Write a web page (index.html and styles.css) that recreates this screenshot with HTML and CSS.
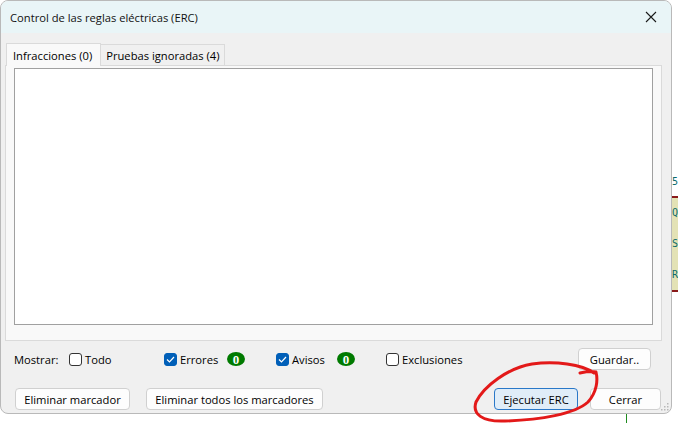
FILE: index.html
```html
<!DOCTYPE html>
<html lang="es">
<head>
<meta charset="utf-8">
<link rel="stylesheet" href="styles.css">
</head>
<body>
<div class="desktop">
  <div class="schem">
    <span class="pin pin5">5</span>
    <div class="part">
      <span class="pin">Q</span>
      <span class="pin">S</span>
      <span class="pin">R</span>
    </div>
  </div>
  <div class="wire"></div>

  <div class="window">
    <div class="titlebar">
      <span class="title">Control de las reglas eléctricas (ERC)</span>
      <svg class="close" width="12" height="12" viewBox="0 0 12 12"><path d="M1 1 L11 11 M11 1 L1 11" stroke="#1a1a1a" stroke-width="1.1"/></svg>
    </div>
    <div class="content">
      <div class="tabs">
        <div class="tab active">Infracciones (0)</div>
        <div class="tab">Pruebas ignoradas (4)</div>
      </div>
      <div class="panel">
        <div class="listbox"></div>
      </div>
      <div class="row filters">
        <span class="lbl">Mostrar:</span>
        <label class="chk todo"><span class="box"></span>Todo</label>
        <label class="chk errs"><span class="box on"><svg width="9" height="7" viewBox="0 0 9 7"><path d="M1 3.5 L3.5 6 L8 1" stroke="#fff" stroke-width="1.2" fill="none"/></svg></span>Errores</label>
        <span class="badge">0</span>
        <label class="chk avis"><span class="box on"><svg width="9" height="7" viewBox="0 0 9 7"><path d="M1 3.5 L3.5 6 L8 1" stroke="#fff" stroke-width="1.2" fill="none"/></svg></span>Avisos</label>
        <span class="badge">0</span>
        <label class="chk excl"><span class="box"></span>Exclusiones</label>
        <button class="btn save">Guardar..</button>
      </div>
      <div class="row actions">
        <button class="btn b1">Eliminar marcador</button>
        <button class="btn b2">Eliminar todos los marcadores</button>
        <button class="btn primary">Ejecutar ERC</button>
        <button class="btn close-btn">Cerrar</button>
      </div>
    </div>
    <svg class="grip" width="8" height="8" viewBox="0 0 8 8"><g fill="#b8b8b8"><rect x="6" y="0" width="1.5" height="1.5"/><rect x="3" y="3" width="1.5" height="1.5"/><rect x="6" y="3" width="1.5" height="1.5"/><rect x="0" y="6" width="1.5" height="1.5"/><rect x="3" y="6" width="1.5" height="1.5"/><rect x="6" y="6" width="1.5" height="1.5"/></g></svg>
  </div>

  <svg class="scribble" width="134" height="68" viewBox="0 0 134 68">
    <path d="M124 15 C 112 6, 85 3, 62 6 C 38 10, 14 28, 6 44 C 2 56, 12 64, 35 63 C 70 62, 105 56, 118 44 C 127 34, 128 22, 126 14 C 121 13, 115 14, 110 15" fill="none" stroke="#e31919" stroke-width="3" stroke-linecap="round" stroke-linejoin="round"/>
  </svg>
</div>
</body>
</html>
```

FILE: styles.css
```css
* { box-sizing: border-box; }
html, body { margin: 0; padding: 0; }
body {
  width: 678px;
  height: 423px;
  background: #ffffff;
  font-family: "Open Sans", "Noto Sans", sans-serif;
  font-size: 11.2px;
  color: #000;
  overflow: hidden;
}
.desktop { position: relative; width: 678px; height: 423px; }

.schem { position: absolute; left: 672px; top: 0; width: 6px; height: 423px; }
.pin { font-family: "DejaVu Sans Mono", monospace; font-size: 10px; color: #0a6a6a; line-height: 1; }
.pin5 { position: absolute; left: 0; top: 177px; }
.part {
  position: absolute; left: 0; top: 196px; width: 10px; height: 96px;
  background: #e3e2b5;
  border-top: 2px solid #8a1a1a;
  border-bottom: 2px solid #8a1a1a;
  display: flex; flex-direction: column; justify-content: space-around;
}
.wire { position: absolute; left: 626px; top: 410px; width: 1px; height: 13px; background: #1e8a1e; }

.window {
  position: absolute; left: 0; top: 0;
  width: 672px; height: 414px;
  background: #f0f0f0;
  border: 1px solid #b9b9b9;
  border-radius: 8px;
  overflow: hidden;
  display: flex; flex-direction: column;
}
.titlebar {
  height: 32px; flex: none;
  background: #e9f5f7;
  display: flex; align-items: center; justify-content: space-between;
  padding: 0 14px 0 9px;
}
.title { color: #111; }
.close { display: block; }

.content { padding: 10px 9px 0 4px; flex: 1; display: flex; flex-direction: column; }
.tabs { display: flex; align-items: flex-end; height: 22px; padding-left: 1px; }
.tab {
  height: 21px; padding: 0 4px 0 5px;
  border: 1px solid #dadada; border-bottom: none;
  background: #f0f0f0;
  display: flex; align-items: center;
  white-space: nowrap;
}
.tab.active { height: 23px; background: #f9f9f9; padding: 0 8px 0 6px; margin-bottom: -1px; position: relative; z-index: 1; }
.tab + .tab { border-left: none; }

.panel {
  background: #f9f9f9;
  border: 1px solid #dadada;
  padding: 2px 8px 15px 8px;
  height: 276px;
}
.listbox { background: #fff; border: 1px solid #a0a0a0; height: 257px; }

.row { display: flex; align-items: center; white-space: nowrap; }
.filters { height: 36px; padding-left: 9px; padding-right: 11px; }
.lbl { width: 55px; flex: none; }
.chk { display: flex; align-items: center; flex: none; }
.todo { width: 95px; }
.errs { width: 63px; }
.avis { width: 61px; margin-left: 31px; }
.excl { margin-left: 31px; }
.box {
  width: 13px; height: 13px; border: 1px solid #333; border-radius: 3px; background: #fff;
  margin-right: 3px; display: flex; align-items: center; justify-content: center; flex: none;
}
.box.on { background: #005fb8; border-color: #005fb8; }
.badge {
  width: 18px; height: 14px; border-radius: 50%; flex: none;
  background: #007a00; color: #fff;
  font-family: "Liberation Serif", serif; font-weight: bold; font-size: 13px;
  display: flex; align-items: center; justify-content: center; line-height: 1;
}
.btn {
  font-family: inherit; font-size: 11.2px; color: #000;
  background: #fdfdfd; border: 1px solid #d0d0d0; border-radius: 4px;
  height: 22px; padding: 0; white-space: nowrap; flex: none;
}
.save { margin-left: auto; width: 73px; }
.actions { padding-left: 10px; padding-right: 1px; padding-top: 11px; }
.b1 { width: 115px; }
.b2 { margin-left: 16px; width: 177px; }
.primary { margin-left: auto; width: 84px; background: #e0edf8; border-color: #2a78c8; }
.close-btn { margin-left: 12px; width: 71px; }
.grip { position: absolute; right: 2px; bottom: 2px; }

.scribble { position: absolute; left: 470px; top: 358px; }
```
